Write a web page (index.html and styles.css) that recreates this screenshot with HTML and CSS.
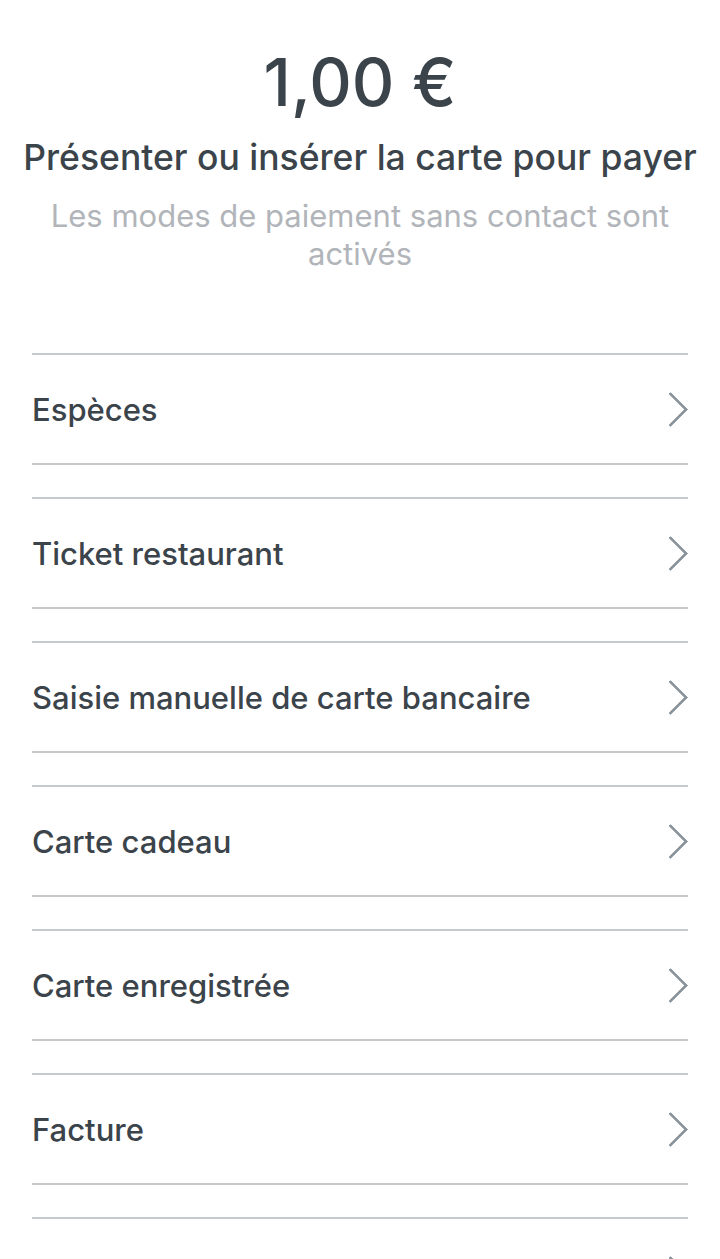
FILE: index.html
```html
<!DOCTYPE html>
<html lang="fr">

<head>
    <meta charset="UTF-8">
    <meta name="viewport" content="width=device-width, initial-scale=1.0">
    <title>Paiement</title>
    <link rel="stylesheet" href="styles.css">
</head>

<body>
    <div class="payment">
        <div class="amount">1,00 €</div>
        <h1 class="prompt">Présenter ou insérer la carte pour payer</h1>
        <p class="hint">Les modes de paiement sans contact sont activés</p>

        <ul class="methods">
            <li><a href="#">Espèces</a></li>
            <li><a href="#">Ticket restaurant</a></li>
            <li><a href="#">Saisie manuelle de carte bancaire</a></li>
            <li><a href="#">Carte cadeau</a></li>
            <li><a href="#">Carte enregistrée</a></li>
            <li><a href="#">Facture</a></li>
            <li><a href="#">Autre</a></li>
        </ul>
    </div>
</body>

</html>
```

FILE: styles.css
```css
body {
    font-family: Inter, "Noto Sans", sans-serif;
    margin: 0;
    padding: 0;
    background-color: #fff;
    color: #3b434b;
}

.payment {
    padding: 46px 32px 0;
}

.amount {
    text-align: center;
    font-size: 66px;
    font-weight: 500;
    line-height: 72px;
}

.prompt {
    text-align: center;
    font-size: 35.5px;
    font-weight: 500;
    margin: 20px -20px 0;
    line-height: 40px;
}

.hint {
    text-align: center;
    color: #b1b5ba;
    font-size: 31px;
    line-height: 38px;
    margin: 19px 0 0;
}

.methods {
    list-style-type: none;
    padding: 0;
    margin: 80px 0 0;
}

.methods li {
    border-top: 2px solid #c6cacd;
    border-bottom: 2px solid #c6cacd;
    margin-bottom: 32px;
}

.methods li a {
    display: flex;
    align-items: center;
    justify-content: space-between;
    height: 108px;
    color: #3b434b;
    text-decoration: none;
    font-size: 31px;
    font-weight: 500;
}

.methods li a::after {
    content: "";
    width: 22px;
    height: 22px;
    border-top: 3px solid #8a949c;
    border-right: 3px solid #8a949c;
    border-radius: 1px;
    transform: rotate(45deg);
    margin-right: 5px;
}
```
